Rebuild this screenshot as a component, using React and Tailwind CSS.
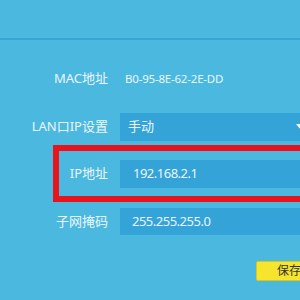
export default function App() {
  const font = { fontFamily: '"Noto Sans", "Noto Sans CJK SC", sans-serif' };
  return (
    <div className="w-[300px] h-[300px] overflow-hidden bg-[#4bb8df] text-[#eaf6fb]" style={font}>
      <div className="h-[40px] border-b-2 border-[#3aa3d3]" />

      <div className="flex items-center h-[27px] mt-[25px]">
        <div className="w-[108px] text-right text-[13px]">MAC地址</div>
        <div className="ml-[17px] text-[11.5px] tracking-[-0.2px]">B0-95-8E-62-2E-DD</div>
      </div>

      <div className="flex items-center h-[28px] mt-[21px] -mr-[60px]">
        <div className="w-[108px] shrink-0 text-right text-[13px]">LAN口IP设置</div>
        <div className="ml-[12px] flex-1 h-full bg-[#34a3d8] flex items-center pl-[8px] text-[13px] relative">
          手动
          <span className="absolute left-[176px] top-[11px] w-0 h-0 border-l-[5px] border-r-[5px] border-t-[6px] border-l-transparent border-r-transparent border-t-white" />
        </div>
      </div>

      <div className="ml-[53px] -mr-[60px] mt-[4px] border-[6px] border-[#e8141c] pt-[9px] pb-[8px] flex items-center">
        <div className="w-[49px] shrink-0 text-right text-[13px]">IP地址</div>
        <div className="ml-[12px] flex-1 h-[28px] bg-[#34a3d8] flex items-center pl-[13px] text-[13px] tracking-[-0.5px]">192.168.2.1</div>
      </div>

      <div className="flex items-center h-[27px] mt-[6px] -mr-[60px]">
        <div className="w-[108px] shrink-0 text-right text-[13px]">子网掩码</div>
        <div className="ml-[12px] flex-1 h-full bg-[#34a3d8] flex items-center pl-[12px] text-[13px] tracking-[-0.5px]">255.255.255.0</div>
      </div>

      <div className="mt-[26px] ml-[256px] -mr-[40px] h-[20px] bg-[#f6e52c] border border-[#d8c81e] rounded-[2px] flex items-center pl-[20px] text-[12px] text-[#333]">
        保存
      </div>
    </div>
  );
}
